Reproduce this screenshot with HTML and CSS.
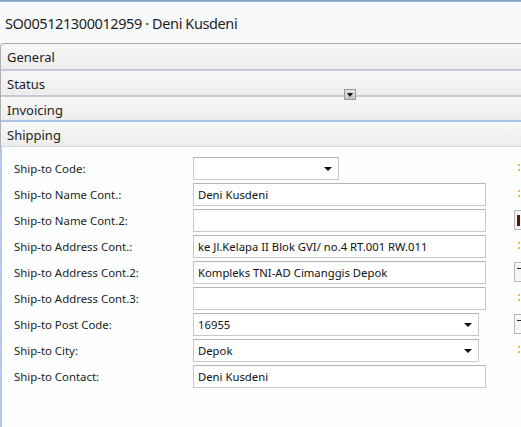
FILE: index.html
```html
<!DOCTYPE html>
<html>
<head>
<meta charset="utf-8">
<link rel="stylesheet" href="styles.css">
</head>
<body>
<div class="page">
  <div class="topline"></div>
  <div class="title">SO005121300012959 · Deni Kusdeni</div>
  <div class="panel">
    <div class="hdr hdr-first">General</div>
    <div class="hdr">Status</div>
    <div class="hdr hdr-inv">Invoicing</div>
    <div class="hdr hdr-active">Shipping</div>
    <div class="body">
      <div class="row">
        <div class="lbl">Ship-to Code:</div>
        <div class="fld sel short"><span></span><i class="arr"></i></div>
        <div class="side"><b class="dots"></b></div>
      </div>
      <div class="row">
        <div class="lbl">Ship-to Name Cont.:</div>
        <div class="fld">Deni Kusdeni</div>
        <div class="side"><b class="dots"></b></div>
      </div>
      <div class="row">
        <div class="lbl">Ship-to Name Cont.2:</div>
        <div class="fld"></div>
        <div class="side"><div class="mini"><i class="bar red"></i></div></div>
      </div>
      <div class="row">
        <div class="lbl">Ship-to Address Cont.:</div>
        <div class="fld">ke Jl.Kelapa II Blok GVI/ no.4 RT.001 RW.011</div>
        <div class="side"><b class="dots"></b></div>
      </div>
      <div class="row">
        <div class="lbl">Ship-to Address Cont.2:</div>
        <div class="fld">Kompleks TNI-AD Cimanggis Depok</div>
        <div class="side"><div class="mini"><i class="tee"></i></div></div>
      </div>
      <div class="row">
        <div class="lbl">Ship-to Address Cont.3:</div>
        <div class="fld"></div>
        <div class="side"><b class="dots"></b></div>
      </div>
      <div class="row">
        <div class="lbl">Ship-to Post Code:</div>
        <div class="fld sel mid"><span>16955</span><i class="arr"></i></div>
        <div class="side"><div class="mini"><i class="tee"></i></div></div>
      </div>
      <div class="row">
        <div class="lbl">Ship-to City:</div>
        <div class="fld sel mid"><span>Depok</span><i class="arr"></i></div>
        <div class="side"><b class="dots"></b></div>
      </div>
      <div class="row">
        <div class="lbl">Ship-to Contact:</div>
        <div class="fld">Deni Kusdeni</div>
        <div class="side"></div>
      </div>
    </div>
    <div class="collapse-btn"><i class="arr"></i></div>
  </div>
</div>
</body>
</html>
```
FILE: styles.css
```css
html, body {
  margin: 0;
  padding: 0;
}
body {
  width: 521px;
  height: 427px;
  overflow: hidden;
  background: #f7f9fb;
  font-family: "Noto Sans", "Open Sans", sans-serif;
  color: #1a1a1a;
}
.page {
  width: 521px;
  height: 427px;
  overflow: hidden;
  display: flex;
  flex-direction: column;
}
.topline {
  height: 2px;
  background: linear-gradient(#7b98c6, #a9bedf);
  flex: none;
}
.title {
  height: 41px;
  box-sizing: border-box;
  padding: 11px 0 0 5px;
  font-size: 14.5px;
  letter-spacing: -0.4px;
  line-height: 20px;
  color: #1e1e1e;
  flex: none;
}
.panel {
  position: relative;
  flex: 1;
  display: flex;
  flex-direction: column;
  border-left: 1px solid #b0b0b0;
  border-top-left-radius: 4px;
}
.hdr {
  height: 26px;
  box-sizing: border-box;
  padding: 4px 0 0 6px;
  font-size: 13px;
  line-height: 18px;
  color: #1e1e1e;
  background: linear-gradient(#f7f7f7, #ededed);
  border-top: 2px solid #c3cbd8;
  flex: none;
}
.hdr-first {
  border-top: 1px solid #a8a8a8;
  border-top-left-radius: 4px;
}
.hdr-inv {
  height: 25px;
}
.hdr-active {
  border-top: 2px solid #a9c2ea;
  border-bottom: 1px solid #d6d6d6;
  height: 27px;
}
.body {
  flex: 1;
  background: #fdfefe;
  border-left: 2px solid #b3c8e8;
  margin-left: -1px;
  padding: 10px 0 0 12px;
  display: flex;
  flex-direction: column;
  gap: 3px;
}
.row {
  display: flex;
  align-items: center;
  height: 23px;
}
.lbl {
  width: 179px;
  flex: none;
  font-size: 11.4px;
  color: #222;
  white-space: nowrap;
}
.fld {
  width: 293px;
  height: 23px;
  box-sizing: border-box;
  flex: none;
  border: 1px solid #c9c9c9;
  border-top-color: #b4b4b4;
  background: #fff;
  font-size: 11.3px;
  line-height: 21px;
  padding-left: 4px;
  color: #111;
  white-space: nowrap;
  overflow: hidden;
  display: flex;
  align-items: center;
}
.sel span {
  flex: 1;
}
.short {
  width: 146px;
  margin-right: 147px;
}
.mid {
  width: 286px;
  margin-right: 7px;
}
.arr {
  display: block;
  width: 0;
  height: 0;
  border-left: 4px solid transparent;
  border-right: 4px solid transparent;
  border-top: 4px solid #111;
  margin-right: 6px;
  margin-top: 1px;
}
.side {
  margin-left: 27px;
  width: 20px;
  flex: none;
  height: 23px;
  position: relative;
}
.dots {
  position: absolute;
  left: 5px;
  top: 7px;
  width: 2px;
  height: 2px;
  background: #f2b453;
  box-shadow: 0 5px 0 #f2b453;
}
.mini {
  width: 20px;
  height: 20px;
  margin-top: 1px;
  margin-left: 1px;
  box-sizing: border-box;
  border: 1px solid #b8b8b8;
  background: #f6f6f6;
  position: relative;
}
.bar.red {
  position: absolute;
  left: 2px;
  top: 4px;
  width: 3px;
  height: 11px;
  background: #5a1410;
}
.tee {
  position: absolute;
  left: 2px;
  top: 5px;
  width: 6px;
  height: 1px;
  background: #222;
}
.collapse-btn {
  position: absolute;
  left: 343px;
  top: 46px;
  width: 12px;
  height: 11px;
  box-sizing: border-box;
  border: 1px solid #9a9a9a;
  background: linear-gradient(#e4e4e4, #c4c4c4);
  display: flex;
  align-items: center;
  justify-content: center;
}
.collapse-btn .arr {
  margin: 1px 0 0 0;
  border-left-width: 3px;
  border-right-width: 3px;
  border-top-width: 4px;
}
```
